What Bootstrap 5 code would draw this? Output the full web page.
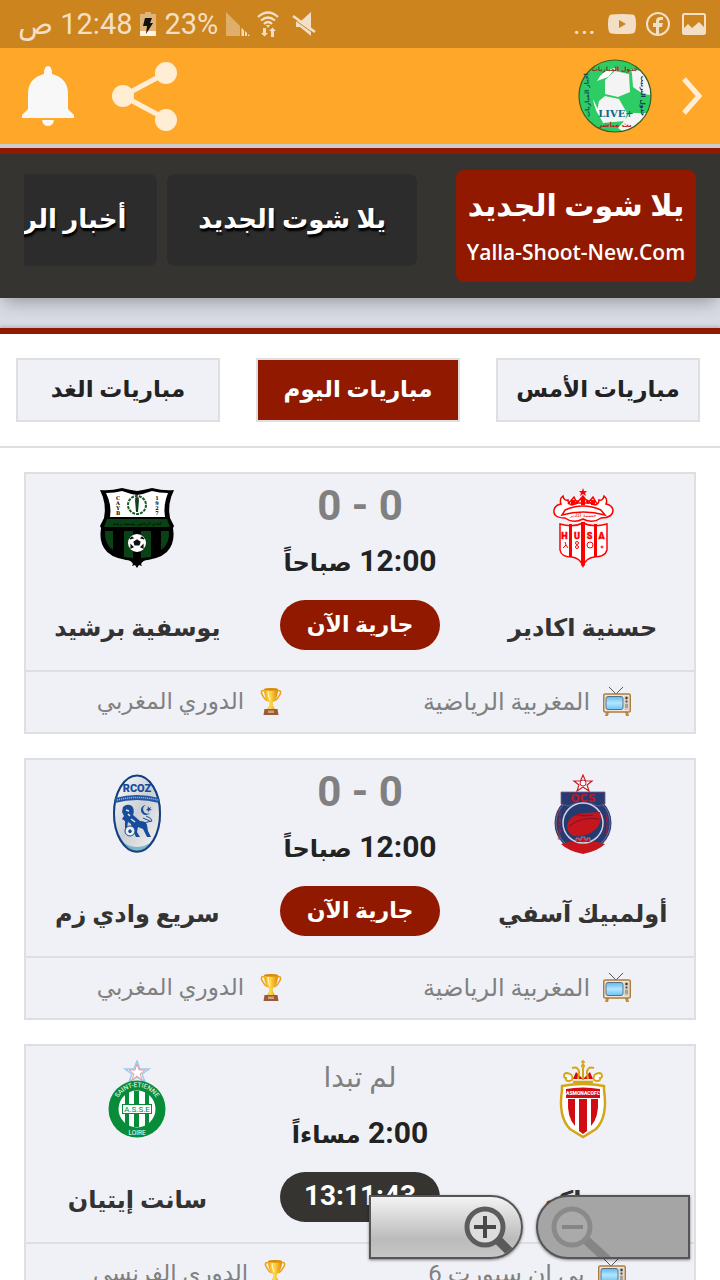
<!DOCTYPE html>
<html lang="ar" dir="rtl">
<head>
<meta charset="utf-8">
<meta name="viewport" content="width=device-width, initial-scale=1">
<title>يلا شوت الجديد</title>
<link href="https://cdn.jsdelivr.net/npm/bootstrap@5.3.0/dist/css/bootstrap.min.css" rel="stylesheet">
<style>
  :root { --brand: #911900; --ink: #363431; --line: #dfdfdf; --panel: #f0f1f6; }
  body { font-family: Roboto, "DejaVu Sans", sans-serif; color: #222; background: #fff; }
  svg { display: block; flex: none; }
  a { color: inherit; text-decoration: none; }
  .status-bar { height: 48px; padding: 0 14px 0 10px; background: #cb841e; color: #f3dfc6; font-size: 29px; line-height: 46px; }
  .app-bar { height: 96px; padding: 0 18px 0 22px; background: #ffa728; }
  .page-view { min-height: 0; border-top: 4px solid #ccc; background: #fff; overflow-y: auto; scrollbar-width: none; }
  .page-view::-webkit-scrollbar { display: none; }
  .site-head { height: 150px; padding: 16px 24px; gap: 39px; border-top: 6px solid var(--brand); background: var(--ink); box-shadow: 0 8px 16px -4px rgba(0,0,0,.3); position: relative; }
  .site-logo { width: 240px; height: 112px; border-radius: 8px; background: var(--brand); color: #fff; }
  .logo-ar { font-size: 30px; line-height: 52px; padding-top: 10px; }
  .logo-en { font-family: "Open Sans", sans-serif; font-size: 21px; font-weight: 600; line-height: 40px; }
  .site-nav { gap: 10px; margin-top: 4px; }
  .site-nav a { height: 92px; padding: 0 31px; border-radius: 8px; background: #2c2c2c; color: #fff; font-size: 26px; font-weight: 700; line-height: 90px; white-space: nowrap; text-shadow: 1px 3px 2px #000; }
  .ad-strip { height: 30px; background: #d8dbe3; }
  .day-tabs { padding: 24px 0; border-top: 6px solid var(--brand); border-bottom: 2px solid var(--line); box-shadow: 0 -2px 3px rgba(0,0,0,.15); }
  .day-cell { padding: 0 20px 0 16px; }
  .day-btn { height: 64px; border: 2px solid var(--line); border-radius: 0; background: var(--panel); color: #222; padding: 0; font-size: 23px; font-weight: 700; line-height: 56px; }
  .day-btn.active { background: var(--brand) !important; color: #fff !important; border-color: var(--line) !important; }
  .matches { padding: 24px; gap: 24px; }
  .match { border: 2px solid var(--line); background: var(--panel); }
  .match-main { padding: 10px 0 20px; }
  .crest { margin: 4px auto 38px; }
  .team { font-size: 24px; font-weight: 700; line-height: 44px; color: #333; white-space: nowrap; }
  .score { font-size: 42px; font-weight: 700; line-height: 44px; color: #808080; }
  .score.pending { font-size: 28px; font-weight: 400; }
  .kickoff { font-size: 30px; font-weight: 700; line-height: 66px; white-space: nowrap; }
  .kickoff .ar { font-size: 24px; line-height: 1; }
  .state { width: 160px; height: 50px; margin: 6px auto 0; border-radius: 25px; background: var(--brand); color: #fff; font-size: 22px; font-weight: 700; line-height: 50px; }
  .state.timer { background: var(--ink); font-size: 28px; line-height: 48px; }
  .match-info { height: 62px; border-top: 2px solid var(--line); color: #808080; font-size: 24px; line-height: 60px; }
  .match-info .item { gap: 13px; white-space: nowrap; }
  .match-info .league-item { padding-right: 4px; }
  .match-info .league { font-size: 23px; }
  .zoom-box { position: absolute; right: 30px; bottom: 21px; gap: 13px; }
  .zoom-btn { width: 154px; height: 64px; padding: 0; border: 2px solid #555; overflow: hidden; box-shadow: 0 1px 3px rgba(0,0,0,.5); }
  .zoom-btn.minus { border-radius: 32px 0 0 32px; background: #a5a5a5; }
  .zoom-btn.plus { border-radius: 0 32px 32px 0; background: linear-gradient(#f3f3f3, #bbb 70%, #c6c6c6); }
</style>
</head>
<body>
<svg width="0" height="0" class="position-absolute" aria-hidden="true">
  <defs>
    <linearGradient id="gold" x1="0" x2="1"><stop offset="0" stop-color="#f3a712"/><stop offset=".45" stop-color="#ffd84a"/><stop offset="1" stop-color="#e08a00"/></linearGradient>
    <linearGradient id="screen" x1="0" y1="0" x2="0" y2="1"><stop offset="0" stop-color="#5db8ee"/><stop offset=".5" stop-color="#b5e6ff"/><stop offset="1" stop-color="#6cc3f2"/></linearGradient>
    <linearGradient id="silver" x1="0" x2="1" y1="0" y2="1"><stop offset="0" stop-color="#fff"/><stop offset=".5" stop-color="#ccd0d4"/><stop offset="1" stop-color="#f6f6f6"/></linearGradient>
    <symbol id="tv" viewBox="0 0 28 30">
      <path d="M6 0l7 7 7-7" fill="none" stroke="#555" stroke-width="1"/>
      <path d="M3 25l-1 4h3l1-4zM22 25l1 4h3l-1-4z" fill="#c08a43"/>
      <rect x=".7" y="7" width="26.600" height="18" rx="1.500" fill="#efe6d6" stroke="#b07c3c" stroke-width="1.500"/>
      <rect x="3" y="9.500" width="17" height="13" rx="2" fill="url(#screen)" stroke="#58718a"/>
      <rect x="21.500" y="9" width="4" height="14" fill="#cfcac2"/><circle cx="23.500" cy="11" r="1.200" fill="#333"/><circle cx="23.500" cy="14.500" r="1" fill="#444"/><path d="M22 18h3M22 20h3" stroke="#777"/>
    </symbol>
    <symbol id="cup" viewBox="0 0 28 30">
      <path d="M8 4C3 2 4 7 6 9c2 4 4 5 6 4M20 4c5-2 4 3 2 5-2 4-4 5-6 4" fill="none" stroke="#e9a21a" stroke-width="1.600"/>
      <path d="M7 2h14c0 8-3 12-5 13-1 2 0 4 2 7h-8c2-3 3-5 2-7-2-1-5-5-5-13z" fill="url(#gold)"/>
      <ellipse cx="14" cy="2.300" rx="7" ry="1.400" fill="#d88a0b"/>
      <path d="M11 4c0 5 1 7 2 9" stroke="#fff3a8" stroke-width="1.500" fill="none"/>
      <path d="M7.500 22h13l1 6h-15z" fill="#9b5a36"/><rect x="11" y="23.500" width="6" height="2.500" fill="#c9a08a"/>
    </symbol>
  </defs>
</svg>

<div class="vh-100 d-flex flex-column overflow-hidden position-relative">
  <div class="status-bar d-flex align-items-center flex-shrink-0">
    <svg width="24" height="24" viewBox="0 0 24 24"><rect x="1" y="2" width="22" height="20" rx="1.500" fill="none" stroke="#f3dfc6" stroke-width="2"/><path d="M1 17l5-5 4 4 7-6 6 6v6H1z" fill="#f3dfc6"/></svg>
    <svg width="46" height="24" viewBox="2 0 46 24"><circle cx="24" cy="12" r="11" fill="none" stroke="#f3dfc6" stroke-width="2"/><path d="M22 23v-8h-3v-4h3V9c0-3 2-4 4-4h3v3h-2c-1 0-2 .5-2 1.500V11h4l-1 4h-3v8z" fill="#f3dfc6"/></svg>
    <svg width="28" height="20" viewBox="0 0 28 20"><path fill-rule="evenodd" d="M3 .5Q14-.5 25 .5q3 .5 3 9.500t-3 9.500q-11 1-22 0Q0 19 0 10T3 .5zM11 6v8l7-4z" fill="#f3dfc6"/></svg>
    <span class="px-2 mx-1">...</span>
    <svg class="me-auto" width="24" height="24" viewBox="0 0 24 24"><path d="M19 0v24L8 15H4V9h5z" fill="#f3dfc6"/><path d="M0 6l24 17" stroke="#cb841e" stroke-width="1"/><path d="M1 4l22 16" stroke="#f3dfc6" stroke-width="2.500"/></svg>
    <svg width="42" height="26" viewBox="7 0 42 26"><g fill="none" stroke="#f3dfc6" stroke-width="2.200"><path d="M15 6q10-9 20 0M18 9.500q7-6 14 0M21 13q4-4 8 0"/></g><path d="M23 14h4l-2 3zM20 17h3v5h2l-3.500 3.500L18 22h2zM28 26v-6h-2l3.500-3.500L33 20h-2v6z" fill="#f3dfc6"/></svg>
    <svg width="24" height="24" viewBox="0 0 24 24"><path d="M0 0l14 14v10H0z" fill="#dfae68"/><path d="M15.500 15.500l2.500 3V24h-2.500zM19 19l2 2v3h-2zM22 22l2 2h-2z" fill="#f3dfc6"/></svg>
    <span class="px-2">23%</span>
    <svg width="16" height="24" viewBox="0 0 16 24"><path d="M5 0h6v2h5v17H0V2h5z" fill="#e0b478"/><path d="M0 19h16v5H0z" fill="#fff3e2"/><path d="M5 6h7l-2 5h3L6 22l1-8H3z" fill="#111"/></svg>
    <span class="ps-2 pe-1 me-1 text-nowrap">12:48 ص</span>
  </div>

  <header class="app-bar d-flex align-items-center flex-shrink-0">
    <button class="btn p-0 border-0" aria-label="التالي"><svg width="20" height="38" viewBox="0 0 20 38"><path d="M2 2l15 17L2 36" fill="none" stroke="#ffedd4" stroke-width="5"/></svg></button>
    <svg class="me-4 ms-auto" width="80" height="74" viewBox="0 0 80 74" role="img" aria-label="Live+">
      <defs><clipPath id="ball"><circle cx="37" cy="37" r="36"/></clipPath></defs>
      <g clip-path="url(#ball)">
        <rect width="74" height="74" fill="#2dcc65"/>
        <path d="M27 21l10-9 14 3 1 18-12 5-13-3zM53 10l19 4v22l-7-1-10-7-1-13zM21 42l6-5 14 3 8 14-2 8-22 2-6-12zM46 62l6-8h20l-7 13-17 8-8-6z" fill="#f4f4f4"/>
        <path d="M19 22q6-12 19-13l-8 9zM15 40l8 17 5 5q-10-4-13-22z" fill="#fff"/>
      </g>
      <circle cx="37" cy="37" r="36" fill="none" stroke="#35611f" stroke-width="1.200"/>
      <g font-family="DejaVu Sans" font-weight="700" text-anchor="middle">
        <text x="37" y="12" font-size="6" fill="#a5211d">جدول المباريات</text>
        <text transform="translate(11 36) rotate(-92)" font-size="6" fill="#164a5d">اخبار المباريات</text>
        <text transform="translate(63 37) rotate(90)" font-size="6" fill="#12205c">جدول الترتيب</text>
        <text x="37" y="68" font-size="7" fill="#c01e24">بث مباشر</text>
        <text x="38" y="58" font-size="10" font-family="DejaVu Serif" fill="#0f6687" direction="ltr">LIVE+</text>
      </g>
    </svg>
    <button class="btn p-0 border-0" aria-label="مشاركة"><svg width="66" height="70" viewBox="0 0 66 70"><path d="M54 12L11 35l43 23" fill="none" stroke="#ffedd4" stroke-width="5"/><g fill="#ffedd4"><circle cx="54" cy="12" r="11"/><circle cx="11" cy="35" r="11"/><circle cx="54" cy="59" r="11"/></g></svg></button>
    <button class="btn p-0 border-0 me-3" aria-label="الإشعارات"><svg width="74" height="62" viewBox="0 0 74 62"><path d="M22 9q0-8 4-8t4 8q16 4 16 20v15l6 6v3H0v-3l6-6V29Q6 13 22 9zM20 55h12q-1 6-6 6t-6-6z" fill="#f8f8f8"/></svg></button>
  </header>

  <main class="page-view flex-grow-1">
    <div class="site-head d-flex">
      <a href="#" class="site-logo flex-shrink-0 d-flex flex-column align-items-center text-nowrap">
        <b class="logo-ar">يلا شوت الجديد</b>
        <span class="logo-en" dir="ltr">Yalla-Shoot-New.Com</span>
      </a>
      <nav class="site-nav d-flex flex-grow-1 overflow-hidden">
        <a href="#">يلا شوت الجديد</a>
        <a href="#">أخبار الرياضة</a>
      </nav>
    </div>
    <div class="ad-strip"></div>
    <div class="day-tabs row g-0">
      <div class="col-4 day-cell"><button class="btn day-btn w-100">مباريات الأمس</button></div>
      <div class="col-4 day-cell"><button class="btn day-btn w-100 active">مباريات اليوم</button></div>
      <div class="col-4 day-cell"><button class="btn day-btn w-100">مباريات الغد</button></div>
    </div>

    <section class="matches d-flex flex-column">
      <article class="match">
        <div class="match-main row g-0 text-center">
          <div class="col-4">
            <svg class="crest" width="80" height="80" viewBox="0 0 80 80" role="img" aria-label="حسنية اكادير">
              <g fill="none" stroke="red" stroke-width="1.500">
                <path d="M40 31q-10 5-18-1-12 0-11-8 1-5 7-6-2-5 2-8 1 5 5 4 0 4 4 5l6-2h12l5 2q4-1 4-5 4 1 5-4 4 3 2 8 6 1 7 6 0 8-12 8-8 6-18 1z" fill="#fff"/>
                <path d="M17 36q13 4 23-1 10 5 24 1v26q-2 7-13 7-8 1-11 9-3-8-11-9-11 0-12-7z" fill="#fff"/>
                <path d="M22 22q18-8 36 0l4 5q-22-6-43 0z" fill="#fff"/>
                <path d="M25 16l6-7 3 6 6-7 5 7 5-6 4 7M31 15l9-5 9 5"/>
              </g>
              <path d="M40 0l1 3h3l-2 2 1 3-3-2-3 2 1-3-2-2h3zM38 10h4v7h-4zM28 12h4v5h-4zM48 12h4v5h-4zM26 36h3v33h-3zM38 34h4v43l-2 2-2-2zM51 36h3v33h-3z" fill="red"/>
              <g font-family="Roboto" font-weight="900" font-size="9" fill="red" stroke="red" stroke-width=".4" text-anchor="middle"><text x="21.500" y="51">H</text><text x="34" y="51">U</text><text x="46.500" y="51">S</text><text x="58.500" y="51">A</text></g>
              <text x="40" y="29" font-size="5" font-family="DejaVu Sans" fill="red" text-anchor="middle">حسنية اكادير</text>
              <g fill="none" stroke="red"><circle cx="47" cy="57" r="3"/><circle cx="59" cy="59" r="1"/><circle cx="34" cy="55" r="1.500"/><circle cx="34" cy="59" r="1.500"/><path d="M22 54l1 3-3 3M23 57l2 3"/></g>
            </svg>
            <div class="team">حسنية اكادير</div>
          </div>
          <div class="col-4">
            <div class="score" dir="ltr">0 - 0</div>
            <div class="kickoff">12:00 <span class="ar">صباحاً</span></div>
            <div class="state">جارية الآن</div>
          </div>
          <div class="col-4">
            <svg class="crest" width="80" height="80" viewBox="0 0 80 80" role="img" aria-label="يوسفية برشيد">
              <path d="M3 2q10 1 22-2 8 2 15 3 7-1 15-3 12 3 22 2-7 14-4 28l4 8-1 2q2 12-3 20-5 9-22 12-5 0-7 4l1 2-3-1-2 3-2-3-3 1 1-2q-2-4-7-4-17-3-22-12-5-8-3-20l-1-2 4-8Q10 16 3 2z" fill="#000"/>
              <path d="M9 5q9 0 16-2 8 3 15 4 7-1 15-4 7 2 16 2-5 12-3 24H13Q15 17 9 5z" fill="#fff"/>
              <path d="M10 31h60l3 8H7zM8 43h8v19q-9-6-8-19zM27 43h9v27l-9-1zM44 43h10v26l-10 1zM64 43h8q1 13-8 19z" fill="#0a4215"/>
              <circle cx="40" cy="17" r="9" fill="none" stroke="#1c5a2b" stroke-width="2" stroke-dasharray="3 1"/><path d="M38 12h4l-1 12h-2z" fill="#0a4215"/><circle cx="40" cy="11" r="2" fill="#333"/>
              <circle cx="40" cy="55" r="9" fill="#fff"/><path d="M40 52l3 2-1 3h-4l-1-3zM33 51l2-2 1 1zM47 51l-2-2-1 1zM34 60l2-1-2-2zM46 60l-2-1 2-2z" fill="#111" stroke="#111" stroke-width="1.200"/>
              <g font-family="DejaVu Serif" font-weight="700" font-size="5" text-anchor="middle"><text x="21" y="12">C</text><text x="21" y="17">A</text><text x="21" y="22">Y</text><text x="21" y="27">B</text><text x="60" y="12">1</text><text x="60" y="17">9</text><text x="60" y="22">2</text><text x="60" y="27">7</text></g>
              <text x="40" y="37" font-size="4" font-family="DejaVu Sans" text-anchor="middle">النادي الرياضي يوسفية برشيد</text>
            </svg>
            <div class="team">يوسفية برشيد</div>
          </div>
        </div>
        <div class="match-info row g-0">
          <div class="col-6 item d-flex justify-content-center align-items-center"><svg width="28" height="30"><use href="#tv"/></svg><span>المغربية الرياضية</span></div>
          <div class="col-6 item league-item d-flex justify-content-center align-items-center"><svg width="28" height="30"><use href="#cup"/></svg><span class="league">الدوري المغربي</span></div>
        </div>
      </article>

      <article class="match">
        <div class="match-main row g-0 text-center">
          <div class="col-4">
            <svg class="crest" width="80" height="80" viewBox="0 0 80 80" role="img" aria-label="أولمبيك آسفي">
              <path d="M40 1l2.500 6H49l-5 4 2 6-6-4-6 4 2-6-5-4h6.500z" fill="#fff" stroke="#c8202a" stroke-width="1.200"/><circle cx="40" cy="9" r="3" fill="none" stroke="#c8202a"/>
              <circle cx="40" cy="49" r="28.500" fill="#283a72"/><circle cx="40" cy="49" r="27" fill="none" stroke="#8b93b4" stroke-width=".6"/>
              <path d="M18 70q9-3 17-3l1-5h8l1 5q8 0 17 3-7 7-22 10-15-3-22-10z" fill="#c4161c"/>
              <path d="M18 18h44v12l-7 2q-15-7-30 0l-7-2z" fill="#283a72" stroke="#7d5a80" stroke-width=".8"/>
              <circle cx="40" cy="49" r="20" fill="#243a70" stroke="#cdd3e4" stroke-width="1.500"/>
              <path d="M24 53q1-13 19-14l14-1q3 11-5 18-8 7-22 6-5-3-6-9z" fill="#c4161c"/><path d="M26 52q14-10 30-7M32 40q6 3 18 1" fill="none" stroke="#7a1430"/>
              <g font-family="DejaVu Sans" font-weight="700" fill="#c4161c" text-anchor="middle"><text x="40" y="28" font-size="11">OCS</text><text transform="translate(17 51) rotate(-90)" font-size="3">Olympic Club Safi</text><text transform="translate(63 51) rotate(90)" font-size="3">أولمبيك آسفي</text></g>
              <path d="M33 68v-4h3v2h2v-3h4v3h2v-2h3v4" fill="#c4161c" stroke="#9ba3c4" stroke-width=".7"/>
            </svg>
            <div class="team">أولمبيك آسفي</div>
          </div>
          <div class="col-4">
            <div class="score" dir="ltr">0 - 0</div>
            <div class="kickoff">12:00 <span class="ar">صباحاً</span></div>
            <div class="state">جارية الآن</div>
          </div>
          <div class="col-4">
            <svg class="crest" width="80" height="80" viewBox="0 0 80 80" role="img" aria-label="سريع وادي زم">
              <ellipse cx="40" cy="40" rx="24" ry="39" fill="#8d9399"/><ellipse cx="40" cy="39.500" rx="23" ry="38" fill="url(#silver)" stroke="#123f85" stroke-width="2"/>
              <path d="M18 24q22-6 44 0v5q-22-6-44 0z" fill="#2456a2"/><path d="M20 26q20-5 41 0" fill="none" stroke="#a9bfe0" stroke-width="1.500" stroke-dasharray="1 1"/>
              <text x="40" y="18" font-size="11" font-family="Roboto" font-weight="900" fill="#174c9c" text-anchor="middle">RCOZ</text>
              <path d="M26 33q4-4 9-1 3 4 1 9l7 6q6 0 7 4l1 6 3 6h-4l-4-8-5-2-1 5 3 5h-4l-4-8-1-5-3-2-1 6 2 2h-4v-9l-3-2 2-3-2-4z" fill="#174c9c"/>
              <path d="M29 36l3 1M31 40l2 2M34 45l4 3" stroke="#dfe6ef" stroke-width="1.500"/><path d="M46 49l9-2q0-3-6-5M46 44l7 3" fill="none" stroke="#174c9c"/>
              <circle cx="33" cy="57" r="5" fill="#eee" stroke="#174c9c"/><path d="M33 55l2 2-1 2h-2l-1-2z" fill="#174c9c"/>
              <path d="M49 31a5 5 0 1 0 4 8 4.500 4.500 0 1 1-4-8z" fill="#174c9c"/><path d="M51 32l1 2 2-1-1 2 2 1-3 .5-1 2-.5-2.500-2-1h2z" fill="#174c9c"/><path d="M27 69q13 8 26 0-4 8-13 8t-13-8z" fill="#3f98b4" opacity=".6"/>
            </svg>
            <div class="team">سريع وادي زم</div>
          </div>
        </div>
        <div class="match-info row g-0">
          <div class="col-6 item d-flex justify-content-center align-items-center"><svg width="28" height="30"><use href="#tv"/></svg><span>المغربية الرياضية</span></div>
          <div class="col-6 item league-item d-flex justify-content-center align-items-center"><svg width="28" height="30"><use href="#cup"/></svg><span class="league">الدوري المغربي</span></div>
        </div>
      </article>

      <article class="match">
        <div class="match-main row g-0 text-center">
          <div class="col-4">
            <svg class="crest" width="80" height="80" viewBox="0 0 80 80" role="img" aria-label="موناكو">
              <path d="M29 20q2-6-5-7-3 0-3 3 0 2 2 2-1 3 3 3zM51 20q-2-6 5-7 3 0 3 3 0 2-2 2 1 3-3 3z" fill="#fff" stroke="#d4a514" stroke-width="1.800"/>
              <path d="M30 19l3-7 7 7 7-7 3 7z" fill="#d20a11"/><path d="M40 8v12M29 8q7-2 7 5l-1 6M51 8q-7-2-7 5l1 6" fill="none" stroke="#d4a514" stroke-width="2"/><path d="M38 2h4M40 0v5" stroke="#d4a514" stroke-width="1.500"/><circle cx="40" cy="6" r="2" fill="#d4a514"/>
              <path d="M30 22h20" stroke="#d4a514" stroke-width="2.500"/>
              <path d="M19 26q21-4 42 0v4q4 27-8 39l-13 8-13-8q-12-12-8-39z" fill="#fff" stroke="#d4a514" stroke-width="2.500"/>
              <path d="M23 29q17-3 34 0v9H23z" fill="#d20a11"/><path d="M25 39h7v27q-8-8-7-27zM36 39h8v32l-4 3-4-3zM48 39h7q1 19-7 27z" fill="#d20a11"/>
              <text x="40" y="35" font-size="5" font-family="Roboto" font-weight="900" fill="#fff" text-anchor="middle">ASMONACOFC</text>
            </svg>
            <div class="team">موناكو</div>
          </div>
          <div class="col-4">
            <div class="score pending">لم تبدا</div>
            <div class="kickoff">2:00 <span class="ar">مساءاً</span></div>
            <div class="state timer">13:11:43</div>
          </div>
          <div class="col-4">
            <svg class="crest" width="80" height="80" viewBox="0 0 80 80" role="img" aria-label="سانت إيتيان">
              <path d="M40 1l3 8h9l-7 5 3 8-8-5-8 5 3-8-7-5h9z" fill="#fff" stroke="#9cc9ea" stroke-width="1.500"/><path d="M40 4l2 6h6l-5 4 2 6-5-4-5 4 2-6-5-4h6z" fill="#fff" stroke="#ee9aa6" stroke-width="1"/>
              <circle cx="40" cy="49" r="28.500" fill="#078d3a"/><circle cx="40" cy="49" r="18.500" fill="#fff"/>
              <path d="M28 34.500q2-2 4-3v35l-4-3zM37 31h5v36h-5zM48 31.500l4 3v29l-4 3z" fill="#078d3a"/>
              <rect x="25.500" y="44.500" width="29" height="9" fill="#fff" stroke="#078d3a"/><text x="40" y="52" direction="ltr" font-size="8" font-family="Roboto" fill="#078d3a" text-anchor="middle">A.S.S.E</text>
              <path id="ring" d="M18 49a22 22 0 0 1 44 0" fill="none"/>
              <g font-family="Roboto" font-size="6.500" fill="#fff" direction="ltr" text-anchor="middle"><text><textPath href="#ring" startOffset="50%">SAINT-ETIENNE</textPath></text><text x="40" y="75">LOIRE</text></g>
            </svg>
            <div class="team">سانت إيتيان</div>
          </div>
        </div>
        <div class="match-info row g-0">
          <div class="col-6 item d-flex justify-content-center align-items-center"><svg width="28" height="30"><use href="#tv"/></svg><span>بي ان سبورت 6</span></div>
          <div class="col-6 item league-item d-flex justify-content-center align-items-center"><svg width="28" height="30"><use href="#cup"/></svg><span class="league">الدوري الفرنسي</span></div>
        </div>
      </article>
    </section>
  </main>

  <div class="zoom-box d-flex">
    <button class="zoom-btn minus" aria-label="تصغير"><svg width="150" height="60" viewBox="0 0 150 60"><path d="M48 43l25 23" stroke="#858585" stroke-width="9"/><circle cx="34" cy="30" r="18" fill="#aaa" stroke="#8a8a8a" stroke-width="5"/><path d="M24 30h21" stroke="#858585" stroke-width="4"/></svg></button>
    <button class="zoom-btn plus" aria-label="تكبير"><svg width="150" height="60" viewBox="0 0 150 60"><path d="M127 43l20 20" stroke="#5a5a5a" stroke-width="9"/><circle cx="114" cy="30" r="18" fill="#ddd" stroke="#5c5c5c" stroke-width="5"/><path d="M103 30h22M114 19v22" stroke="#484848" stroke-width="4"/></svg></button>
  </div>
</div>
<script src="https://cdn.jsdelivr.net/npm/bootstrap@5.3.0/dist/js/bootstrap.bundle.min.js"></script>
</body>
</html>
